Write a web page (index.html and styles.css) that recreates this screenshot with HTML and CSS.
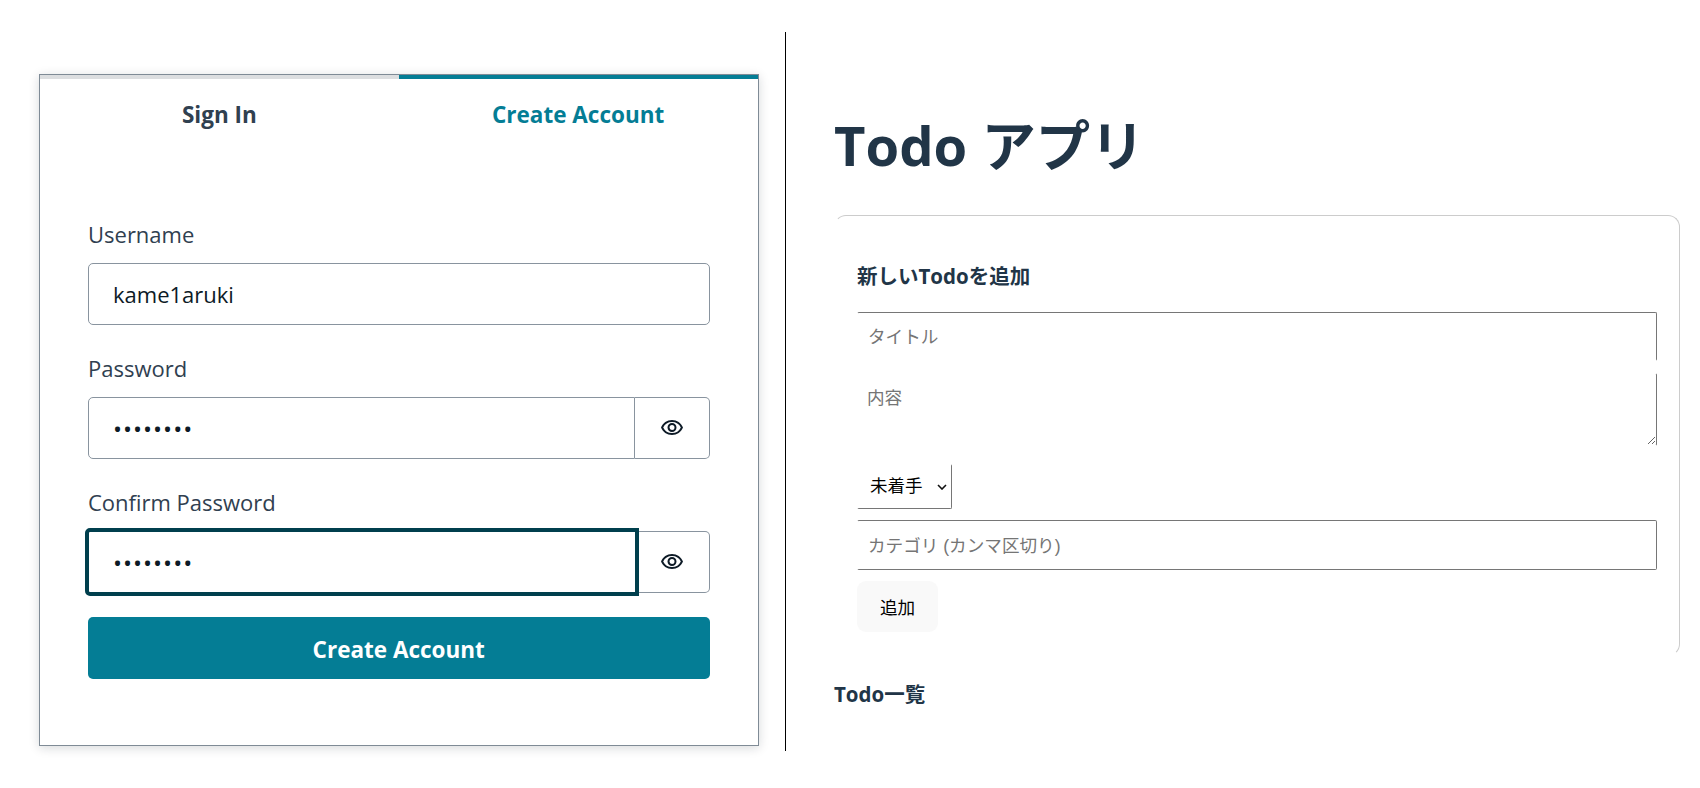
FILE: index.html
```html
<!DOCTYPE html>
<html lang="en">
<head>
    <meta charset="UTF-8" />
    <title>Todo</title>
    <link rel="stylesheet" href="styles.css">
</head>
<body>
    <div class="auth-pane">
        <div class="auth-card">
            <div class="tabs">
                <div class="tab">Sign In</div>
                <div class="tab tab-active">Create Account</div>
            </div>
            <form class="auth-form">
                <label class="field-label">Username</label>
                <div class="field-row">
                    <input class="auth-input" type="text" value="kame1aruki">
                </div>
                <label class="field-label">Password</label>
                <div class="field-row">
                    <input class="auth-input auth-input-joined" type="password" value="password">
                    <button class="eye-btn" type="button">
                        <svg width="24" height="24" viewBox="0 0 24 24" fill="#0d1a26"><path d="M12 6a9.77 9.77 0 0 1 8.82 5.5A9.77 9.77 0 0 1 12 17a9.77 9.77 0 0 1-8.82-5.5A9.77 9.77 0 0 1 12 6m0-2C7 4 2.73 7.11 1 11.5 2.73 15.89 7 19 12 19s9.27-3.11 11-7.5C21.27 7.11 17 4 12 4zm0 5a2.5 2.5 0 1 1 0 5 2.5 2.5 0 0 1 0-5m0-2a4.5 4.5 0 1 0 0 9 4.5 4.5 0 0 0 0-9z"/></svg>
                    </button>
                </div>
                <label class="field-label">Confirm Password</label>
                <div class="field-row">
                    <input class="auth-input auth-input-joined auth-input-focus" type="password" value="password">
                    <button class="eye-btn" type="button">
                        <svg width="24" height="24" viewBox="0 0 24 24" fill="#0d1a26"><path d="M12 6a9.77 9.77 0 0 1 8.82 5.5A9.77 9.77 0 0 1 12 17a9.77 9.77 0 0 1-8.82-5.5A9.77 9.77 0 0 1 12 6m0-2C7 4 2.73 7.11 1 11.5 2.73 15.89 7 19 12 19s9.27-3.11 11-7.5C21.27 7.11 17 4 12 4zm0 5a2.5 2.5 0 1 1 0 5 2.5 2.5 0 0 1 0-5m0-2a4.5 4.5 0 1 0 0 9 4.5 4.5 0 0 0 0-9z"/></svg>
                    </button>
                </div>
                <button class="submit-btn" type="button">Create Account</button>
            </form>
        </div>
    </div>

    <div class="todo-pane">
        <h1 class="todo-title">Todo アプリ</h1>
        <div class="todo-card">
            <h3 class="todo-heading">新しいTodoを追加</h3>
            <input class="todo-input todo-title-input" type="text" placeholder="タイトル">
            <textarea class="todo-input todo-textarea" placeholder="内容"></textarea>
            <div class="select-wrap">
                <select class="todo-select">
                    <option>未着手</option>
                </select>
                <svg class="select-arrow" width="10" height="6" viewBox="0 0 10 6" fill="none" stroke="#111" stroke-width="1.6"><path d="M1 1l4 4 4-4"/></svg>
            </div>
            <input class="todo-input todo-category" type="text" placeholder="カテゴリ (カンマ区切り)">
            <button class="add-btn" type="button">追加</button>
        </div>
        <h3 class="list-heading">Todo一覧</h3>
    </div>
</body>
</html>
```

FILE: styles.css
```css
* {
    box-sizing: border-box;
}

html, body {
    margin: 0;
    height: 100%;
}

body {
    display: flex;
    align-items: flex-start;
    background-color: #fff;
    overflow: hidden;
    font-family: "Open Sans", "Noto Sans CJK JP", sans-serif;
}

.auth-pane {
    width: 787px;
    height: 719px;
    margin-top: 32px;
    padding: 42px 26.5px 0 39px;
    border-right: 1px solid #000;
}

.auth-card {
    height: 672px;
    border: 1px solid #7f8b96;
    box-shadow: 0 2px 10px rgba(13, 26, 38, 0.16);
}

.tabs {
    display: flex;
}

.tab {
    flex: 1;
    height: 78px;
    padding-top: 21px;
    border-top: 4px solid #dcdee0;
    text-align: center;
    font-size: 22.5px;
    line-height: 30px;
    font-weight: 700;
    color: #304050;
}

.tab-active {
    border-top-color: #047d95;
    color: #047d95;
}

.auth-form {
    display: flex;
    flex-direction: column;
    padding: 62px 48px 0;
}

.field-label {
    margin: 4px 0 14px;
    font-size: 22px;
    line-height: 30px;
    color: #304050;
}

.field-row {
    display: flex;
    height: 62px;
    margin-bottom: 24px;
}

.auth-input {
    flex: 1;
    min-width: 0;
    padding: 0 24px;
    border: 1px solid #89949f;
    border-radius: 5px;
    background: #fff;
    outline: none;
    font-family: inherit;
    font-size: 22px;
    color: #0d1a26;
}

.auth-input[type="password"] {
    font-size: 24px;
    letter-spacing: 1px;
}

.auth-input-joined {
    border-radius: 5px 0 0 5px;
}

.auth-input-focus {
    position: relative;
    height: 68px;
    margin: -3px -4px -3px -3px;
    border: 4px solid #003f4d;
}

.eye-btn {
    width: 75px;
    flex: none;
    display: flex;
    align-items: center;
    justify-content: center;
    padding: 0;
    border: 1px solid #89949f;
    border-left-width: 0;
    border-radius: 0 5px 5px 0;
    background: #fff;
}

.submit-btn {
    height: 62px;
    padding: 2px 0 0;
    border: 0;
    border-radius: 5px;
    background-color: #047d95;
    color: #fff;
    font-family: inherit;
    font-size: 22.5px;
    font-weight: 700;
}

.todo-pane {
    flex: 1;
    padding: 0 20px 0 48px;
}

.todo-title {
    margin: 109px 0 0;
    font-size: 54.4px;
    line-height: 72px;
    font-weight: 700;
    color: #213547;
}

.todo-card {
    display: flex;
    flex-direction: column;
    align-items: flex-start;
    height: 441px;
    margin-top: 34px;
    padding: 20px 22px;
    border: 1px solid;
    border-color: #ccc #ccc #fff #fff;
    border-radius: 12px;
}

.todo-heading, .list-heading {
    margin: 0;
    font-size: 20.5px;
    line-height: 28px;
    font-weight: 700;
    color: #213547;
}

.todo-heading {
    margin-top: 26px;
    margin-bottom: 22px;
}

.list-heading {
    margin-top: 24px;
}

.todo-input {
    width: 800px;
    padding: 2px 10px 0;
    border: 1px solid;
    border-radius: 2px;
    outline: none;
    background: #fff;
    font-family: "Liberation Sans", "Noto Sans CJK JP", sans-serif;
    font-size: 17.6px;
}

.todo-input::placeholder {
    color: #757575;
}

.todo-title-input {
    height: 49px;
    border-color: #767676 #767676 #fff #fff;
}

.todo-textarea {
    height: 73px;
    margin-top: 12px;
    padding: 10px 9px 0;
    border-color: #fff #767676 #fff #fff;
}

.select-wrap {
    position: relative;
    height: 45px;
    margin-top: 18px;
}

.todo-select {
    width: 95px;
    height: 45px;
    padding: 0 0 2px 12px;
    border: 1px solid;
    border-color: #fff #767676 #767676 #fff;
    border-radius: 2px;
    background: #fff;
    appearance: none;
    font-family: "Liberation Sans", "Noto Sans CJK JP", sans-serif;
    font-size: 17.5px;
    color: #000;
}

.select-arrow {
    position: absolute;
    top: 20px;
    right: 5px;
    pointer-events: none;
}

.todo-category {
    height: 50px;
    margin-top: 11px;
    border-color: #767676 #767676 #767676 #fff;
}

.add-btn {
    width: 81px;
    height: 51px;
    margin-top: 11px;
    border: 0;
    border-radius: 9px;
    background-color: #f9f9f9;
    font-family: "Liberation Sans", "Noto Sans CJK JP", sans-serif;
    font-size: 17.6px;
    color: #000;
}
```
